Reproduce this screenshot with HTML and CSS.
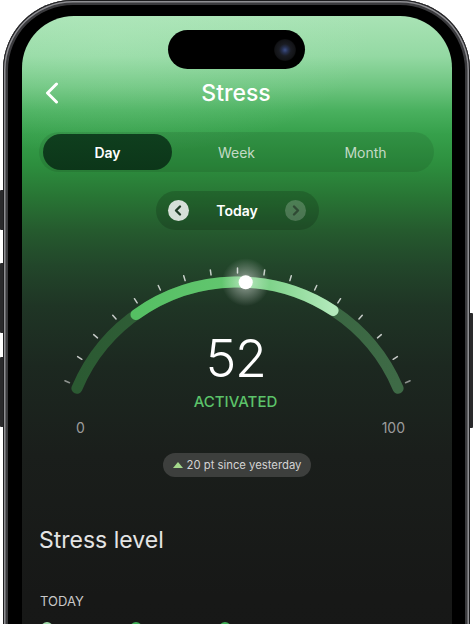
FILE: index.html
```html
<!DOCTYPE html>
<html lang="en">
<head>
<meta charset="utf-8">
<title>Stress</title>
<link rel="stylesheet" href="styles.css">
</head>
<body>
<div class="device">
  <span class="hw-btn hw-action"></span>
  <span class="hw-btn hw-vol-up"></span>
  <span class="hw-btn hw-vol-down"></span>
  <span class="hw-btn hw-power"></span>
  <div class="phone">
    <div class="screen">
      <div class="island"><span class="camera"></span></div>

      <header class="nav">
        <button class="back" aria-label="Back">
          <svg width="14" height="22" viewBox="0 0 14 22"><polyline points="11.5,2 2.5,11 11.5,20" fill="none" stroke="#fff" stroke-width="3" stroke-linecap="round" stroke-linejoin="round"/></svg>
        </button>
        <h1 class="title">Stress</h1>
        <span></span>
      </header>

      <div class="segmented">
        <div class="seg seg-active">Day</div>
        <div class="seg">Week</div>
        <div class="seg">Month</div>
      </div>

      <div class="date-pill">
        <span class="circ circ-prev">
          <svg width="21" height="21" viewBox="0 0 21 21"><polyline points="12,6.5 8,10.5 12,14.5" fill="none" stroke="#1f3b25" stroke-width="2.4" stroke-linecap="round" stroke-linejoin="round"/></svg>
        </span>
        <span class="date-label">Today</span>
        <span class="circ circ-next">
          <svg width="21" height="21" viewBox="0 0 21 21"><polyline points="9,6.5 13,10.5 9,14.5" fill="none" stroke="#2f4a34" stroke-width="2.4" stroke-linecap="round" stroke-linejoin="round"/></svg>
        </span>
      </div>

      <div class="gauge">
        <svg class="gauge-svg" width="430" height="160" viewBox="0 0 430 160">
          <defs>
            <linearGradient id="track" gradientUnits="userSpaceOnUse" x1="55" y1="0" x2="376" y2="0">
              <stop offset="0" stop-color="#2b5a32"/>
              <stop offset="1" stop-color="#3e6a46"/>
            </linearGradient>
            <linearGradient id="active" gradientUnits="userSpaceOnUse" x1="114" y1="0" x2="311" y2="0">
              <stop offset="0" stop-color="#55bf63"/>
              <stop offset="0.5" stop-color="#63c770"/>
              <stop offset="1" stop-color="#b3e9bb"/>
            </linearGradient>
            <radialGradient id="glow">
              <stop offset="0" stop-color="#ffffff" stop-opacity="0.75"/>
              <stop offset="0.35" stop-color="#ffffff" stop-opacity="0.35"/>
              <stop offset="1" stop-color="#ffffff" stop-opacity="0"/>
            </radialGradient>
          </defs>
          <g stroke="#ffffff" stroke-opacity="0.75" stroke-width="1.5" stroke-linecap="round">
            <line x1="215.5" y1="17" x2="215.5" y2="12" transform="rotate(-66.3 215.5 200.5)" stroke-opacity="0.5"/>
            <line x1="215.5" y1="17" x2="215.5" y2="12" transform="rotate(-58.01 215.5 200.5)"/>
            <line x1="215.5" y1="17" x2="215.5" y2="12" transform="rotate(-49.73 215.5 200.5)"/>
            <line x1="215.5" y1="17" x2="215.5" y2="12" transform="rotate(-41.44 215.5 200.5)"/>
            <line x1="215.5" y1="17" x2="215.5" y2="12" transform="rotate(-33.15 215.5 200.5)"/>
            <line x1="215.5" y1="17" x2="215.5" y2="12" transform="rotate(-24.86 215.5 200.5)"/>
            <line x1="215.5" y1="17" x2="215.5" y2="12" transform="rotate(-16.58 215.5 200.5)"/>
            <line x1="215.5" y1="17" x2="215.5" y2="12" transform="rotate(-8.29 215.5 200.5)"/>
            <line x1="215.5" y1="17" x2="215.5" y2="12"/>
            <line x1="215.5" y1="17" x2="215.5" y2="12" transform="rotate(8.29 215.5 200.5)"/>
            <line x1="215.5" y1="17" x2="215.5" y2="12" transform="rotate(16.58 215.5 200.5)"/>
            <line x1="215.5" y1="17" x2="215.5" y2="12" transform="rotate(24.86 215.5 200.5)"/>
            <line x1="215.5" y1="17" x2="215.5" y2="12" transform="rotate(33.15 215.5 200.5)"/>
            <line x1="215.5" y1="17" x2="215.5" y2="12" transform="rotate(41.44 215.5 200.5)"/>
            <line x1="215.5" y1="17" x2="215.5" y2="12" transform="rotate(49.73 215.5 200.5)"/>
            <line x1="215.5" y1="17" x2="215.5" y2="12" transform="rotate(58.01 215.5 200.5)"/>
            <line x1="215.5" y1="17" x2="215.5" y2="12" transform="rotate(66.3 215.5 200.5)" stroke-opacity="0.5"/>
          </g>
          <path d="M 54.9 132.3 A 174.5 174.5 0 0 1 376.1 132.3" fill="none" stroke="url(#track)" stroke-width="11" stroke-linecap="round"/>
          <path d="M 114 58.6 A 174.5 174.5 0 0 1 311.1 54.5" fill="none" stroke="url(#active)" stroke-width="11" stroke-linecap="round"/>
          <circle cx="223.7" cy="26.2" r="24" fill="url(#glow)"/>
          <circle cx="223.7" cy="26.2" r="7" fill="#ffffff"/>
        </svg>
        <div class="readout">
          <div class="value">52</div>
          <div class="status">ACTIVATED</div>
        </div>
      </div>

      <div class="scale"><span>0</span><span>100</span></div>

      <div class="delta"><span class="tri"></span>20 pt since yesterday</div>

      <h2 class="section-title">Stress level</h2>
      <div class="label">TODAY</div>
      <div class="legend">
        <span class="dot dot-light"></span>
        <span class="dot"></span>
        <span class="dot"></span>
      </div>
    </div>
  </div>
</div>
</body>
</html>
```
FILE: styles.css
```css
* { box-sizing: border-box; }

html, body {
  margin: 0;
  padding: 0;
  background: #ffffff;
}

body {
  width: 473px;
  height: 624px;
  overflow: hidden;
  font-family: Inter, "Noto Sans", "Liberation Sans", sans-serif;
}

.device {
  position: relative;
  width: 473px;
  height: 624px;
  overflow: hidden;
}

.hw-btn {
  position: absolute;
  width: 3px;
  background: #2a2a2c;
}
.hw-action { left: 0; top: 190px; height: 40px; border-radius: 1px 0 0 1px; }
.hw-vol-up { left: 0; top: 263px; height: 70px; border-radius: 1px 0 0 1px; }
.hw-vol-down { left: 0; top: 357px; height: 70px; border-radius: 1px 0 0 1px; }
.hw-power { left: 470px; top: 313px; height: 115px; border-radius: 0 1px 1px 0; }

.phone {
  margin: 0 0 0 3px;
  width: 467px;
  height: 820px;
  border-radius: 70px;
  background: #000000;
  padding: 16px 18px 0 19px;
  box-shadow:
    inset 0 0 0 1px #1c1c1e,
    inset 0 0 0 2.5px #8e8e92,
    inset 0 0 0 5px #3a3a3d;
}

.screen {
  position: relative;
  width: 430px;
  height: 800px;
  border-radius: 52px;
  overflow: hidden;
  padding-top: 63px;
  background:
    radial-gradient(ellipse 260px 120px at 90px 20px, rgba(190, 240, 200, 0.25), rgba(190, 240, 200, 0) 100%),
    linear-gradient(180deg,
      #a9e3b5 0px,
      #94d9a3 40px,
      #6ec580 70px,
      #49b05e 95px,
      #36a04b 118px,
      #2d8f3e 148px,
      #287434 182px,
      #255a2e 215px,
      #22462a 250px,
      #1f3525 290px,
      #1c2820 350px,
      #1a1e1b 440px,
      #171817 580px,
      #161716 800px);
}

.island {
  position: absolute;
  top: 14px;
  left: 146px;
  width: 137px;
  height: 39px;
  border-radius: 20px;
  background: #000000;
  display: flex;
  align-items: center;
  justify-content: flex-end;
  padding-right: 9px;
}

.camera {
  width: 22px;
  height: 22px;
  border-radius: 50%;
  background: radial-gradient(circle at 50% 50%, #3d4f86 0, #26304f 3px, #1a1c22 6px, #121316 10px, #0a0a0b 11px);
}

.nav {
  display: grid;
  grid-template-columns: 1fr auto 1fr;
  align-items: center;
  height: 28px;
}

.back {
  justify-self: start;
  display: flex;
  padding: 0;
  margin: 0 0 0 23px;
  border: 0;
  background: none;
}

.title {
  margin: 0;
  font-size: 23px;
  line-height: 28px;
  font-weight: 500;
  color: #ffffff;
  transform: translateX(-1px);
}

.segmented {
  margin: 25px 18px 0 17px;
  height: 40px;
  border-radius: 20px;
  padding: 2px 4px;
  background: rgba(0, 0, 0, 0.09);
  display: grid;
  grid-template-columns: 1fr 1fr 1fr;
}

.seg {
  display: flex;
  align-items: center;
  justify-content: center;
  border-radius: 18px;
  font-size: 14px;
  color: #c3dac6;
}

.seg-active {
  background: linear-gradient(180deg, #0f3f1e, #0c3619);
  color: #ffffff;
  font-weight: 600;
}

.date-pill {
  margin: 19px auto 0;
  width: 163px;
  height: 39px;
  border-radius: 20px;
  background: rgba(0, 0, 0, 0.16);
  display: flex;
  align-items: center;
  justify-content: space-between;
  padding: 0 12px;
}

.circ {
  width: 21px;
  height: 21px;
  border-radius: 50%;
  display: flex;
}

.circ-prev { background: #d6dfd8; }
.circ-next { background: rgba(255, 255, 255, 0.2); }

.date-label {
  font-size: 14px;
  font-weight: 600;
  color: #ffffff;
}

.gauge {
  margin-top: 26px;
  display: grid;
}

.gauge > * { grid-area: 1 / 1; }

.gauge-svg {
  display: block;
  overflow: visible;
}

.readout {
  justify-self: center;
  align-self: start;
  margin-top: 77px;
  padding-right: 3px;
  text-align: center;
}

.value {
  font-size: 52px;
  line-height: 52px;
  font-weight: 300;
  letter-spacing: -1.5px;
  color: #ffffff;
}

.status {
  margin-top: 8px;
  font-size: 15px;
  line-height: 18px;
  font-weight: 500;
  color: #5cc36a;
}

.scale {
  margin-top: 3px;
  display: flex;
  justify-content: space-between;
  padding: 0 47px 0 54px;
  font-size: 14px;
  line-height: 17px;
  color: #9c9c9c;
}

.delta {
  margin: 17px auto 0;
  width: fit-content;
  height: 24px;
  border-radius: 12px;
  background: #3d3f3d;
  display: flex;
  align-items: center;
  gap: 4px;
  padding: 0 10px;
  font-size: 11.3px;
  color: #d3d3d3;
}

.tri {
  width: 0;
  height: 0;
  border-left: 5px solid transparent;
  border-right: 5px solid transparent;
  border-bottom: 6px solid #a4d98b;
}

.section-title {
  margin: 49px 0 0 17px;
  font-size: 23px;
  line-height: 28px;
  font-weight: 400;
  color: #e4e4e4;
}

.label {
  margin: 39px 0 0 18px;
  font-size: 13px;
  line-height: 16px;
  color: #c8c8c8;
}

.legend {
  margin-top: 13px;
  display: flex;
  gap: 77px;
  padding-left: 19px;
}

.dot {
  width: 12px;
  height: 12px;
  border-radius: 50%;
  background: #3fae55;
}

.dot-light { background: #9fdaa8; }
```
